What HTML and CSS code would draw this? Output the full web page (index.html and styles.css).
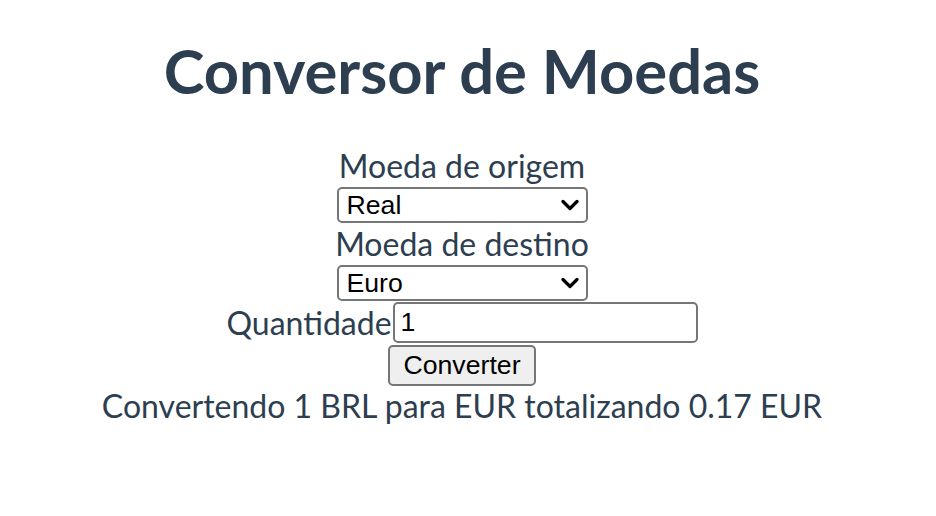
FILE: index.html
```html
<!DOCTYPE html>
<html lang="pt">
<head>
<meta charset="utf-8">
<title>Conversor de Moedas</title>
<link rel="stylesheet" href="styles.css">
</head>
<body>
<div class="app">
  <h1 class="title">Conversor de Moedas</h1>
  <label class="lbl">Moeda de origem</label>
  <span class="sel">
    <select class="select"><option>Real</option></select>
    <svg class="chev" width="18" height="12" viewBox="0 0 18 12"><path d="M2 2.5 L9 9.5 L16 2.5" fill="none" stroke="#000" stroke-width="3.2" stroke-linecap="round" stroke-linejoin="round"/></svg>
  </span>
  <label class="lbl">Moeda de destino</label>
  <span class="sel">
    <select class="select"><option>Euro</option></select>
    <svg class="chev" width="18" height="12" viewBox="0 0 18 12"><path d="M2 2.5 L9 9.5 L16 2.5" fill="none" stroke="#000" stroke-width="3.2" stroke-linecap="round" stroke-linejoin="round"/></svg>
  </span>
  <div class="qty">
    <label class="lbl qlbl">Quantidade</label>
    <input class="input" type="text" value="1">
  </div>
  <button class="btn">Converter</button>
  <p class="result">Convertendo 1 BRL para EUR totalizando 0.17 EUR</p>
</div>
</body>
</html>
```
FILE: styles.css
```css
html, body {
  margin: 0;
  padding: 0;
  background: #ffffff;
}
.app {
  width: 924px;
  display: flex;
  flex-direction: column;
  align-items: center;
  color: #2c3e50;
  font-family: Lato, "Open Sans", sans-serif;
}
.title {
  margin: 32px 0 37px;
  font-size: 61.5px;
  line-height: 76px;
  font-weight: 700;
}
.lbl {
  font-size: 32px;
  line-height: 42px;
  display: block;
}
.sel {
  position: relative;
  display: block;
  width: 251px;
  height: 36px;
}
.select {
  appearance: none;
  -webkit-appearance: none;
  width: 251px;
  height: 36px;
  box-sizing: border-box;
  border: 2px solid #767676;
  border-radius: 5px;
  background: #fff;
  color: #000;
  font-family: "Liberation Sans", Arial, sans-serif;
  font-size: 26.67px;
  padding: 0 0 0 8px;
  margin: 0;
}
.chev {
  position: absolute;
  right: 9px;
  top: 12px;
  pointer-events: none;
}
.qty {
  display: flex;
  align-items: center;
  gap: 1px;
  margin-top: 1px;
}
.qlbl {
  line-height: 40px;
}
.input {
  width: 305px;
  height: 41px;
  box-sizing: border-box;
  border: 2px solid #767676;
  border-radius: 5px;
  font-family: "Liberation Sans", Arial, sans-serif;
  font-size: 26.67px;
  padding: 0 6px;
  margin: 0;
  color: #000;
}
.btn {
  margin-top: 2px;
  width: 148px;
  height: 41px;
  box-sizing: border-box;
  border: 2px solid #767676;
  border-radius: 5px;
  background: #efefef;
  color: #000;
  font-family: "Liberation Sans", Arial, sans-serif;
  font-size: 26.67px;
  padding: 0;
}
.result {
  margin: 0;
  font-size: 32px;
  line-height: 40px;
}
```
